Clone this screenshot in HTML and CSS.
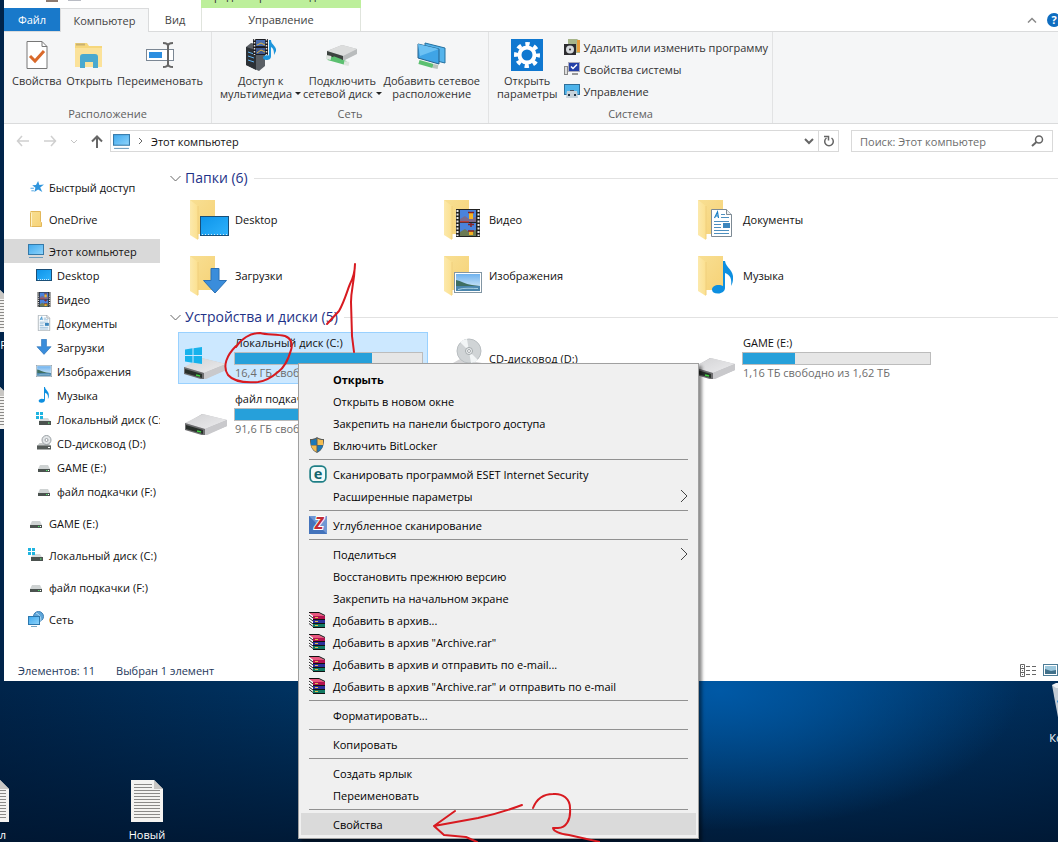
FILE: index.html
```html
<!DOCTYPE html>
<html lang="ru">
<head>
  <meta charset="UTF-8">
  <title>Этот компьютер</title>
  <link rel="stylesheet" href="styles.css">
</head>
<body>

  <svg class="sprite" aria-hidden="true">
    <defs>
      <linearGradient id="gScreen" x1="0" y1="0" x2="1" y2="1">
        <stop offset="0" stop-color="#3fa9ee"/><stop offset="1" stop-color="#8fd4fb"/>
      </linearGradient>
      <linearGradient id="gDesk" x1="0" y1="0" x2="1" y2="1">
        <stop offset="0" stop-color="#0d94ea"/><stop offset="1" stop-color="#2fb2fb"/>
      </linearGradient>
      <linearGradient id="gFolder" x1="0" y1="0" x2="1" y2="1">
        <stop offset="0" stop-color="#f8df93"/><stop offset="1" stop-color="#f6d277"/>
      </linearGradient>
      <linearGradient id="gFlap" x1="0" y1="0" x2="1" y2="0">
        <stop offset="0" stop-color="#fce9ac"/><stop offset="1" stop-color="#fbe08f"/>
      </linearGradient>
      <linearGradient id="gDrive" x1="0" y1="0" x2="1" y2="1">
        <stop offset="0" stop-color="#d2d2d4"/><stop offset="1" stop-color="#ececee"/>
      </linearGradient>
      <linearGradient id="gSky" x1="0" y1="0" x2="0" y2="1">
        <stop offset="0" stop-color="#6fb2ee"/><stop offset="1" stop-color="#e4f3fb"/>
      </linearGradient>
    </defs>

    <symbol id="pc" viewBox="0 0 16 16">
      <rect x="0.5" y="1.500" width="15" height="10" fill="url(#gScreen)" stroke="#3579a8"/>
      <path d="M1 14.500h14" stroke="#6d9dbd"/>
    </symbol>
    <symbol id="desk" viewBox="0 0 16 16">
      <rect x="0.5" y="2.500" width="15" height="11" fill="url(#gDesk)" stroke="#1a4f78"/>
      <path d="M2 12.500h12" stroke="#cfeafc" stroke-dasharray="1 1"/>
    </symbol>
    <symbol id="film" viewBox="0 0 24 28">
      <rect width="24" height="28" fill="#222"/>
      <path d="M1.500 1v26M22.500 1v26" stroke="#eee" stroke-width="2" stroke-dasharray="2 1.500"/>
      <rect x="4" y="1" width="16" height="12" fill="#4a83dc"/>
      <rect x="4" y="14" width="16" height="13" fill="#4a83dc"/>
      <path d="M4 13v-3l5-3 4 3 7-2v5z" fill="#7b6a8d"/>
      <path d="M4 12h9v1.500H4z" fill="#b5413c"/>
      <path d="M4 27v-4l5-3 4 3 7-2v6z" fill="#6b7a55"/>
      <path d="M13 4h4v6h-4zM13 22h4v4h-4z" fill="#f5b324"/>
      <path d="M12 3.500h6M15 14v4M12 15.500h6M12 22h6" stroke="#8a2320" stroke-width="1.500"/>
    </symbol>
    <symbol id="doc" viewBox="0 0 21 28">
      <path d="M.5.5h15l5 5v22H.5z" fill="#fff" stroke="#7d8a94"/>
      <path d="M15.500.5v5h5" fill="#eee" stroke="#7d8a94"/>
      <path d="M3.500 9l3-6 1 6M4.500 7h3" fill="none" stroke="#1a7fc4" stroke-width="1.200"/>
      <path d="M10 5.500h4M10 8.500h8M3 12.500h15M3 15.500h7M3 18.500h7M3 21.500h15M3 24.500h15" stroke="#4d8fbf"/>
      <rect x="12" y="14" width="7" height="5" fill="#3c86bd"/>
    </symbol>
    <symbol id="down" viewBox="0 0 24 26">
      <path d="M8 .5h8v12h7.500L12 25 .5 12.500H8z" fill="#3a8ddb" stroke="#2a70b5"/>
    </symbol>
    <symbol id="pic" viewBox="0 0 28 21">
      <rect x="0.5" y="0.5" width="27" height="20" fill="#fff" stroke="#8296a4"/>
      <rect x="2" y="2" width="24" height="17" fill="url(#gSky)"/>
      <path d="M2 8c5 1 9 4 16 5l8 1v1H2z" fill="#3f6f62"/>
      <path d="M2 14h24v5H2z" fill="#4a86ad"/>
      <path d="M4 17.500c6-2 14-1 20-1" stroke="#a6d0e6" fill="none"/>
    </symbol>
    <symbol id="note" viewBox="0 0 22 33">
      <path d="M11 0h2c1 7 9 9 8 18 0 3-1 5-2 7 1-8-1-11-6-13v15c0 3-3 5.500-7 5.500S0 31 0 28.500 3 24 6.500 24c2 0 3.500.5 4.500 1z" fill="#0d8fe0"/>
    </symbol>
    <symbol id="hdd" viewBox="0 0 16 16">
      <path d="M4 6h8l2 4H2z" fill="#cfd3d3"/>
      <rect x="2" y="10" width="12" height="3" fill="#4b524f"/>
      <path d="M10 11.500h1.500" stroke="#4fe06a"/>
      <path d="M12 11.500h1" stroke="#fff"/>
    </symbol>
    <symbol id="hddwin" viewBox="0 0 16 16">
      <path d="M5 7h7l2 3H3z" fill="#d6dada"/>
      <rect x="3" y="10" width="12" height="4" fill="#4b524f"/>
      <path d="M12 12h1.500" stroke="#6f8"/>
      <path d="M0 1h3v3H0zM4 1h3v3H4zM0 5h3v3H0zM4 5h3v3H4z" fill="#1fb4e0"/>
    </symbol>
    <symbol id="cdhdd" viewBox="0 0 16 16">
      <path d="M3.500 8h9l2.500 3H1z" fill="#c4c8c8"/>
      <circle cx="10.500" cy="5" r="4.500" fill="#e3e6e8" stroke="#9aa0a4"/>
      <circle cx="10.500" cy="5" r="1.500" fill="#fff" stroke="#9aa0a4"/>
      <rect x="1" y="10.500" width="14" height="4" fill="#555b59"/>
      <path d="M12 12.500h2" stroke="#fff"/>
    </symbol>
    <symbol id="net" viewBox="0 0 16 16">
      <circle cx="10.500" cy="5.500" r="5" fill="#5ea6da" stroke="#3f7fb2"/>
      <path d="M8 2c3 1 5 4 5 8" stroke="#b7dcf3" fill="none"/>
      <rect x="0.5" y="5.500" width="11" height="8" fill="url(#gScreen)" stroke="#2d78ae"/>
      <path d="M3 15.500h6" stroke="#7aa7c4"/>
    </symbol>
    <symbol id="star" viewBox="-3 -1 19 18">
      <path d="M9 1l1.500 4.500L16 5l-4.500 3.500L14 14l-5-3-4.500 3 1.300-5L2 6l4.500-.5z" fill="#2f95dd"/>
      <path d="M0 9.500h4M1 12.500h3" stroke="#2f95dd"/>
    </symbol>
    <symbol id="sfolder" viewBox="0 0 16 16">
      <path d="M2.500.5h10v10l1 1v4h-11z" fill="url(#gFolder)" stroke="#e2b75a"/>
      <path d="M2.500.5l1 2v13" stroke="#fff3c9" fill="none"/>
    </symbol>

    <!-- 42x42 tile icons share one folder -->
    <symbol id="bfolder" viewBox="0 0 42 42">
      <path d="M2 2h25v34H6z" fill="url(#gFolder)"/>
      <path d="M2 2l8 6v34l-8-5z" fill="url(#gFlap)"/>
      <path d="M10 8v33" stroke="#f0cf7c"/>
    </symbol>
    <symbol id="bdrive" viewBox="0 0 42 24">
      <path d="M0 11L17 1l25 6v6L20 22 0 15z" fill="#bdbdc0"/>
      <path d="M0 10l18-9 24 6-22 9z" fill="url(#gDrive)"/>
      <path d="M0 10l20 6v7L0 17z" fill="#6e6e70"/>
      <path d="M1 12l17 5v4L1 16z" fill="#29302b"/>
      <path d="M12 18l4 1" stroke="#3fd33f" stroke-width="1.500"/>
      <path d="M20 16l22-9v6l-22 10z" fill="#c9c9cc"/>
    </symbol>
    <symbol id="winlogo" viewBox="0 0 17 17">
      <path d="M0 2.500L7.500 1.300V8H0zM8.500 1.200L17 0v8H8.500zM0 9h7.500v6.700L0 14.500zM8.500 9H17v8l-8.500-1.200z" fill="#16b2ec"/>
    </symbol>
    <symbol id="disc" viewBox="0 0 42 42">
      <path d="M4 30l14-8 22 4-14 12z" fill="#d4d4d6"/>
      <circle cx="27" cy="14" r="12" fill="#d0d4d6" stroke="#b9bec1"/>
      <path d="M27 14L18 5a12 12 0 0 1 7-3zM27 14l9 9a12 12 0 0 1-7 3z" fill="#f2f5f6"/>
      <circle cx="27" cy="14" r="3.500" fill="#eef0f1" stroke="#a3a9ac"/>
      <circle cx="27" cy="14" r="1.500" fill="#fff" stroke="#a3a9ac"/>
    </symbol>

    <symbol id="shield" viewBox="0 0 16 16">
      <path d="M8 0c2 1.500 4 2 7 2 0 6-1 11-7 14C2 13 1 8 1 2c3 0 5-.5 7-2z" fill="#5b5b56"/>
      <path d="M7.500 1.500V8H2V3c2 0 4-.5 5.500-1.500zM8.500 8.500H14c-1 3-2.500 5-5.500 6.500z" fill="#1b78b8"/>
      <path d="M8.500 1.500V8H14V3c-2 0-4-.5-5.500-1.500zM7.500 8.500H2c1 3 2.500 5 5.500 6.500z" fill="#f4bd51"/>
    </symbol>
    <symbol id="eset" viewBox="0 0 16 16">
      <rect x="1" y="1" width="14" height="14" rx="4" fill="#f2fafa" stroke="#1f7f86" stroke-width="1.500"/>
      <text class="eset-e" x="8" y="12" text-anchor="middle">e</text>
    </symbol>
    <symbol id="zlogo" viewBox="0 0 18 18">
      <rect width="18" height="18" fill="#6f97d4"/>
      <path d="M0 0l18 18H0z" fill="#4373bb"/>
      <text class="zlogo-z" x="10" y="13" text-anchor="middle">Z</text>
    </symbol>
    <symbol id="rar" viewBox="0 0 16 16">
      <path d="M0 1h10l6 3H4z" fill="#e8567e"/>
      <path d="M0 1l4 3v11l-4-3z" fill="#fff"/>
      <path d="M0 3l4 3M0 6l4 3M0 9l4 3M0 11.500l4 3" stroke="#222"/>
      <path d="M4 4h12v3H4z" fill="#b3124f"/>
      <path d="M4 8h12v3H4z" fill="#2b2f9a"/>
      <path d="M4 12h12v3H4z" fill="#127a63"/>
      <path d="M0 .5h10l6 3M4 7.500h12M4 11.500h12M4 15.500h12" stroke="#111" fill="none"/>
      <path d="M6 5.500h3M6 9.500h3M6 13.500h3" stroke="#e9c04a"/>
    </symbol>
    <symbol id="textdoc" viewBox="0 0 32 42">
      <path d="M0 0h23l9 9v33H0z" fill="#f4f3f1"/>
      <path d="M23 0v9h9z" fill="#c9c7c4"/>
      <path d="M3 4.500h18M3 7.500h18M3 10.500h26M3 13.500h26M3 16.500h26M3 19.500h26M3 22.500h26M3 25.500h26M3 28.500h26M3 31.500h26M3 34.500h26M3 37.500h26" stroke="#8b8a88"/>
    </symbol>
  </svg>

  <div class="desktop">

    <div class="shortcut shortcut-edge-1"><svg width="32" height="42"><use href="#textdoc"/></svg><span>F</span></div>
    <div class="shortcut shortcut-edge-2"><svg width="32" height="42"><use href="#textdoc"/></svg></div>
    <div class="shortcut shortcut-edge-3"><svg width="32" height="42"><use href="#textdoc"/></svg><span>л</span></div>
    <div class="shortcut shortcut-new"><svg width="32" height="42"><use href="#textdoc"/></svg><span>Новый</span></div>
    <div class="shortcut shortcut-bin">
      <svg width="40" height="42" viewBox="0 0 40 42">
        <path d="M0 2l40-1-6 39H7z" fill="#c3cbd3"/>
        <path d="M0 2l4-2h32l4 1-4 4H4z" fill="#eef1f4"/>
        <path d="M5 18l6-4 6 8-8 6z" fill="#2384d6"/>
      </svg>
      <span>Корзина</span>
    </div>

    <div class="window">
      <header class="titlebar">
        <div class="quick">
          <svg width="40" height="2"><rect width="12" height="2" fill="#8d7a70"/><rect x="22" width="13" height="1" fill="#b9bcc4"/></svg>
        </div>
        <div class="context-title">Средства работы с дисками</div>
      </header>

      <nav class="tabs">
        <button class="tab tab-file">Файл</button>
        <button class="tab tab-active">Компьютер</button>
        <button class="tab tab-view">Вид</button>
        <button class="tab tab-manage">Управление</button>
        <div class="tabs-right">
          <button class="plain" aria-label="Свернуть ленту"><svg width="10" height="6"><path d="M1 5.500l4-4 4 4" fill="none" stroke="#8a8a8a" stroke-width="1.500"/></svg></button>
          <button class="help" aria-label="Справка">?</button>
        </div>
      </nav>

      <section class="ribbon">
        <div class="group group-place">
          <div class="group-tools">
            <button class="big">
              <svg width="22" height="30" viewBox="0 0 22 30"><path d="M1 1.500h15l5 5v22H1z" fill="#fff" stroke="#777"/><path d="M16 1.500v5h5" fill="none" stroke="#777"/><path d="M4 16l5 5 9-10" fill="none" stroke="#d9692a" stroke-width="3"/></svg>
              <span>Свойства</span>
            </button>
            <button class="big">
              <svg width="30" height="30" viewBox="0 0 30 30"><path d="M1 3h12l2 3h13v21H1z" fill="#f6d77c"/><path d="M1 8h27v19H1z" fill="#fbe29a"/><path d="M2 4.500h9" stroke="#c9b170" stroke-width="2"/><path d="M6 28V17q0-3 3-3h12q3 0 3 3v11h-5v-6h-8v6z" fill="#4aa9cf"/></svg>
              <span>Открыть</span>
            </button>
            <button class="big">
              <svg width="30" height="30" viewBox="0 0 30 30"><rect x="1.500" y="9.500" width="27" height="11" fill="#fff" stroke="#7b8794"/><rect x="4" y="12" width="13" height="6" fill="#2b8ee0"/><path d="M18 3q5 0 5 3 0-3 5-3M23 5v21M18 27q5 0 5-3 0 3 5 3" fill="none" stroke="#666" stroke-width="2"/></svg>
              <span>Переименовать</span>
            </button>
          </div>
          <div class="group-name">Расположение</div>
        </div>

        <div class="group group-net">
          <div class="group-tools">
            <button class="big">
              <svg width="34" height="32" viewBox="0 0 34 32"><path d="M2 8l5-4 14 3v20l-6 5L2 26z" fill="#5a5f65"/><path d="M2 8l10 3v20L2 26z" fill="#2c3035"/><path d="M4 13l6 2M4 17l6 2M4 21l6 2" stroke="#5fb1f0"/><rect x="9" y="0" width="15" height="16" fill="#1d1d22"/><path d="M10.500 0v16M22.500 0v16" stroke="#ddd" stroke-width="1.500" stroke-dasharray="1.500 1.500"/><rect x="12" y="1" width="9" height="6" fill="#4a6db0"/><rect x="12" y="9" width="9" height="6" fill="#3f5a93"/><path d="M13 6l4-2 4 2M13 14l4-3 4 2" stroke="#e0b53a" fill="none"/><path d="M25 1h2c0 5 6 6 5 11l-2 4c0-5-1-7-3-8v9c0 3-2 4-4.500 4S19 20 19 18.500s3-3 6-2z" fill="#1e96dc"/></svg>
              <span>Доступ к<br>мультимедиа<i class="caret"></i></span>
            </button>
            <button class="big">
              <svg width="32" height="24" viewBox="0 0 32 24"><path d="M1 8l15-6 15 4v5l-14 7-16-5z" fill="#b9bcbd"/><path d="M1 8l15-6 15 4-14 7z" fill="#dcdddd"/><path d="M1 8l16 5v5L1 13z" fill="#3d4340"/><path d="M2 15l18 5M7 15l8 3" stroke="#5cc070" stroke-width="4"/><path d="M0 14l5 1M18 20l5 1" stroke="#dfe5df" stroke-width="4"/></svg>
              <span>Подключить<br>сетевой диск<i class="caret"></i></span>
            </button>
            <button class="big">
              <svg width="30" height="28" viewBox="0 0 30 28"><path d="M8 2l20 5v15L8 17z" fill="#55b4ec" stroke="#24709f"/><path d="M1 3l21 5v15L1 17z" fill="#3fa4e6" stroke="#24608a"/><path d="M1 3l21 5L3 15z" fill="#6cc1f3"/><path d="M2 21l14 4" stroke="#5cc070" stroke-width="4"/><path d="M16 25l5 1" stroke="#b9c2bb" stroke-width="4"/></svg>
              <span>Добавить сетевое<br>расположение</span>
            </button>
          </div>
          <div class="group-name">Сеть</div>
        </div>

        <div class="group group-system">
          <div class="group-tools">
            <button class="big">
              <svg width="32" height="32" viewBox="0 0 32 32"><rect width="32" height="32" fill="#1078d0"/><circle cx="16" cy="16" r="7.500" fill="none" stroke="#fff" stroke-width="4"/><circle cx="16" cy="16" r="11" fill="none" stroke="#fff" stroke-width="4" stroke-dasharray="4.300 4.340" stroke-dashoffset="2"/></svg>
              <span>Открыть<br>параметры</span>
            </button>
            <div class="small-list">
              <button class="small"><svg width="16" height="16"><path d="M4 0h9l3 2v12H4z" fill="#a8b58a"/><path d="M13 1h3v12h-3z" fill="#e59b3c"/><rect y="5" width="12" height="11" fill="#2c2c30"/><circle cx="6" cy="10.500" r="4" fill="#d7dade"/><circle cx="6" cy="10.500" r="1" fill="#2c2c30"/></svg>Удалить или изменить программу</button>
              <button class="small"><svg width="16" height="16"><rect x="0.5" y="5.500" width="3" height="8" fill="#ddd" stroke="#888"/><rect x="4.500" y="1.500" width="11" height="9" fill="#2340a8" stroke="#aab"/><path d="M7 5.500l2 2 4-4" stroke="#fff" stroke-width="1.500" fill="none"/><path d="M8 13h6" stroke="#999" stroke-width="2"/></svg>Свойства системы</button>
              <button class="small"><svg width="16" height="16"><rect x="0.5" y="1.500" width="15" height="10" fill="#4db3ea" stroke="#2e6f9a"/><path d="M3 8h10l1 7H2z" fill="#c6d2da"/><path d="M6 7.500h4" stroke="#456" /><path d="M5 11v2M11 11v2" stroke="#234" stroke-width="2"/></svg>Управление</button>
            </div>
          </div>
          <div class="group-name">Система</div>
        </div>
      </section>

      <div class="location">
        <div class="arrows">
          <button class="plain" aria-label="Назад"><svg width="14" height="12"><path d="M6 1L1.500 6 6 11M2 6h11" fill="none" stroke="#cfcfcf" stroke-width="1.500"/></svg></button>
          <button class="plain" aria-label="Вперед"><svg width="14" height="12"><path d="M8 1l4.500 5L8 11M12 6H1" fill="none" stroke="#cfcfcf" stroke-width="1.500"/></svg></button>
          <button class="plain" aria-label="Последние"><svg width="8" height="5"><path d="M1 1l3 3 3-3" fill="none" stroke="#c4c4c4"/></svg></button>
          <button class="plain" aria-label="Вверх"><svg width="12" height="13"><path d="M1 6.500L6 1.500l5 5M6 2v11" fill="none" stroke="#666" stroke-width="2"/></svg></button>
        </div>
        <div class="address">
          <svg width="17" height="17"><use href="#pc"/></svg>
          <svg width="5" height="8"><path d="M1 1l3 3-3 3" fill="none" stroke="#666"/></svg>
          <a href="#">Этот компьютер</a>
          <button class="plain drop" aria-label="Журнал"><svg width="10" height="7"><path d="M1 1l4 4 4-4" fill="none" stroke="#666" stroke-width="2"/></svg></button>
          <button class="plain refresh" aria-label="Обновить"><svg width="12" height="12"><path d="M8.500 3A4.300 4.300 0 1 1 3.500 3M1 1.500h4.500v4" fill="none" stroke="#666" stroke-width="1.500"/></svg></button>
        </div>
        <div class="search">
          <input type="text" placeholder="Поиск: Этот компьютер" aria-label="Поиск">
          <svg width="13" height="12"><circle cx="8" cy="4.500" r="3.500" fill="none" stroke="#666" stroke-width="1.500"/><path d="M5.500 7L1 11" stroke="#666" stroke-width="2"/></svg>
        </div>
      </div>

      <div class="content">
        <nav class="tree">
          <a class="node" href="#"><svg width="16" height="16"><use href="#star"/></svg>Быстрый доступ</a>
          <a class="node spaced" href="#"><svg width="16" height="16"><use href="#sfolder"/></svg>OneDrive</a>
          <a class="node spaced current" href="#"><svg width="16" height="16"><use href="#pc"/></svg>Этот компьютер</a>
          <a class="node child" href="#"><svg width="16" height="16"><use href="#desk"/></svg>Desktop</a>
          <a class="node child" href="#"><svg width="16" height="15"><use href="#film"/></svg>Видео</a>
          <a class="node child" href="#"><svg width="16" height="16"><use href="#doc"/></svg>Документы</a>
          <a class="node child" href="#"><svg width="16" height="16"><use href="#down"/></svg>Загрузки</a>
          <a class="node child" href="#"><svg width="16" height="16"><use href="#pic"/></svg>Изображения</a>
          <a class="node child" href="#"><svg width="16" height="16"><use href="#note"/></svg>Музыка</a>
          <a class="node child" href="#"><svg width="16" height="16"><use href="#hddwin"/></svg>Локальный диск (C:)</a>
          <a class="node child" href="#"><svg width="16" height="16"><use href="#cdhdd"/></svg>CD-дисковод (D:)</a>
          <a class="node child" href="#"><svg width="16" height="16"><use href="#hdd"/></svg>GAME (E:)</a>
          <a class="node child" href="#"><svg width="16" height="16"><use href="#hdd"/></svg>файл подкачки (F:)</a>
          <a class="node spaced" href="#"><svg width="16" height="16"><use href="#hdd"/></svg>GAME (E:)</a>
          <a class="node spaced" href="#"><svg width="16" height="16"><use href="#hddwin"/></svg>Локальный диск (C:)</a>
          <a class="node spaced" href="#"><svg width="16" height="16"><use href="#hdd"/></svg>файл подкачки (F:)</a>
          <a class="node spaced" href="#"><svg width="16" height="16"><use href="#net"/></svg>Сеть</a>
        </nav>

        <main class="items">
          <h2><svg width="11" height="7"><path d="M.5 1l5 5 5-5" fill="none" stroke="#666"/></svg>Папки (6)</h2>
          <div class="grid">
            <div class="tile"><svg width="42" height="42"><use href="#bfolder"/><svg x="12" y="18" width="29" height="20" viewBox="0 0 29 20"><rect x="0.5" y="0.5" width="28" height="19" fill="url(#gDesk)" stroke="#1a4f78"/><path d="M2 18.500h25" stroke="#cfeafc" stroke-dasharray="1 2"/></svg></svg><span>Desktop</span></div>
            <div class="tile"><svg width="42" height="42"><use href="#bfolder"/><use href="#film" x="14" y="11" width="24" height="28"/></svg><span>Видео</span></div>
            <div class="tile"><svg width="42" height="42"><use href="#bfolder"/><use href="#doc" x="15" y="11" width="21" height="28"/></svg><span>Документы</span></div>
            <div class="tile"><svg width="42" height="42"><use href="#bfolder"/><use href="#down" x="15" y="14" width="24" height="26"/></svg><span>Загрузки</span></div>
            <div class="tile"><svg width="42" height="42"><use href="#bfolder"/><use href="#pic" x="12" y="18" width="28" height="21"/></svg><span>Изображения</span></div>
            <div class="tile"><svg width="42" height="42"><use href="#bfolder"/><use href="#note" x="16" y="7" width="22" height="33"/></svg><span>Музыка</span></div>
          </div>

          <h2><svg width="11" height="7"><path d="M.5 1l5 5 5-5" fill="none" stroke="#666"/></svg>Устройства и диски (5)</h2>
          <div class="grid">
            <div class="tile selected drive">
              <svg width="50" height="42"><use href="#bdrive" x="5" y="20" width="42" height="24"/><use href="#winlogo" x="6" y="10" width="17" height="17"/></svg>
              <div class="info"><span>Локальный диск (C:)</span><div class="bar"><div style="width: 73%"></div></div><small>16,4 ГБ свободно из 59,5 ГБ</small></div>
            </div>
            <div class="tile"><svg width="42" height="42"><use href="#disc"/></svg><span>CD-дисковод (D:)</span></div>
            <div class="tile drive">
              <svg width="50" height="42"><use href="#bdrive" x="6" y="20" width="42" height="24"/></svg>
              <div class="info"><span>GAME (E:)</span><div class="bar"><div style="width: 28%"></div></div><small>1,16 ТБ свободно из 1,62 ТБ</small></div>
            </div>
            <div class="tile drive">
              <svg width="50" height="42"><use href="#bdrive" x="6" y="20" width="42" height="24"/></svg>
              <div class="info"><span>файл подкачки (F:)</span><div class="bar"><div style="width: 60%"></div></div><small>91,6 ГБ свободно</small></div>
            </div>
          </div>
        </main>
      </div>

      <footer class="status">
        <span>Элементов: 11</span>
        <span>Выбран 1 элемент</span>
        <div class="views">
          <button class="plain" aria-label="Таблица"><svg width="16" height="13"><path d="M.5.5h4v12h-4zM.5 4.500h4M.5 8.500h4M2 2.500h1M2 6.500h1M2 10.500h1M6 2.500h4M6 6.500h4M6 10.500h4M12 2.500h4M12 6.500h4M12 10.500h4" fill="none" stroke="#666"/></svg></button>
          <button class="plain" aria-label="Крупные значки"><svg width="15" height="12"><rect x="0.5" y="0.5" width="14" height="11" fill="#fff" stroke="#4d7c96"/><rect x="2" y="2" width="11" height="8" fill="#9cc7dc"/><path d="M2 5l6 2 5-1v4H2z" fill="#41708a"/></svg></button>
        </div>
      </footer>
    </div>

    <div class="menu" role="menu">
      <button role="menuitem" class="default">Открыть</button>
      <button role="menuitem">Открыть в новом окне</button>
      <button role="menuitem">Закрепить на панели быстрого доступа</button>
      <button role="menuitem"><svg width="16" height="16"><use href="#shield"/></svg>Включить BitLocker</button>
      <hr>
      <button role="menuitem"><svg width="18" height="18"><use href="#eset"/></svg>Сканировать программой ESET Internet Security</button>
      <button role="menuitem" class="sub">Расширенные параметры<svg width="8" height="14"><path d="M1 1l6 6-6 6" fill="none" stroke="#444"/></svg></button>
      <hr>
      <button role="menuitem"><svg width="18" height="18"><use href="#zlogo"/></svg>Углубленное сканирование</button>
      <hr>
      <button role="menuitem" class="sub">Поделиться<svg width="8" height="14"><path d="M1 1l6 6-6 6" fill="none" stroke="#444"/></svg></button>
      <button role="menuitem">Восстановить прежнюю версию</button>
      <button role="menuitem">Закрепить на начальном экране</button>
      <button role="menuitem"><svg width="16" height="16"><use href="#rar"/></svg>Добавить в архив...</button>
      <button role="menuitem"><svg width="16" height="16"><use href="#rar"/></svg>Добавить в архив "Archive.rar"</button>
      <button role="menuitem"><svg width="16" height="16"><use href="#rar"/></svg>Добавить в архив и отправить по e-mail...</button>
      <button role="menuitem"><svg width="16" height="16"><use href="#rar"/></svg>Добавить в архив "Archive.rar" и отправить по e-mail</button>
      <hr>
      <button role="menuitem">Форматировать...</button>
      <hr>
      <button role="menuitem">Копировать</button>
      <hr>
      <button role="menuitem">Создать ярлык</button>
      <button role="menuitem">Переименовать</button>
      <hr>
      <button role="menuitem" class="hover">Свойства</button>
    </div>

    <!-- hand-drawn marks over the window -->
    <svg class="marks" width="380" height="590" viewBox="220 252 380 590" aria-hidden="true">
      <path d="M236 347c5-8 14-14 24-14 7 2 16 1 25 3 6 2 8 8 6 14-3 10-6 17-13 22-7 6-12 9-20 10-12 1-24 0-30-7-6-9-1-20 8-29"/>
      <path d="M327 324l12-13c6-11 8-20 11-27 4-8 5-14 5-20-1 22-4 25-4 38l1 34 2 16"/>
      <path d="M522 805c-16 6-30 10-44 13l-44 8M455 811l-21 15 10 9 22 2 11 5"/>
      <path d="M533 808c4-10 12-14 20-14 10-1 17 5 17 14 1 12-4 20-12 20l-5 0c1 4 8 6 16 7l31 7"/>
    </svg>
  </div>

</body>
</html>
```
FILE: styles.css
```css
body {
  margin: 0;
  font-family: "Open Sans", "Noto Sans", sans-serif;
  font-size: 11px;
  color: #111;
}

button,
input {
  font: inherit;
  color: inherit;
  border: 0;
  padding: 0;
  margin: 0;
  background: none;
}

a {
  color: inherit;
  text-decoration: none;
}

svg {
  display: block;
  flex: none;
}

.sprite {
  position: absolute;
  width: 0;
  height: 0;
}

.desktop {
  position: relative;
  min-height: 100vh;
  overflow: hidden;
  background:
    radial-gradient(ellipse 300px 140px at 720px 690px, #0059a6 0%, rgba(0, 70, 135, 0) 100%),
    linear-gradient(180deg, rgba(0, 20, 45, 0) 82%, rgba(0, 20, 45, 0.8) 100%),
    linear-gradient(90deg, #00244a 0%, #003260 28%, #003b70 75%, #002c58 100%);
}

/* desktop shortcuts */
.shortcut {
  position: absolute;
  width: 72px;
  display: flex;
  flex-direction: column;
  align-items: center;
  gap: 5px;
  color: #fff;
  line-height: 16px;
}

.shortcut-edge-1 { left: -43px; top: 290px; }
.shortcut-edge-2 { left: -43px; top: 387px; }
.shortcut-edge-3 { left: -43px; top: 780px; }
.shortcut-edge-1 span,
.shortcut-edge-3 span { padding-left: 20px; }
.shortcut-new { left: 111px; top: 780px; }
.shortcut-bin { left: 1036px; top: 683px; }

/* window */
.window {
  position: relative;
  margin: 0 -8px 0 4px;
  background: #fff;
}

.titlebar {
  display: flex;
  height: 8px;
  overflow: hidden;
}

.quick {
  width: 197px;
  box-sizing: border-box;
  padding-left: 42px;
}

.context-title {
  display: flex;
  flex-direction: column;
  justify-content: flex-end;
  width: 160px;
  box-sizing: border-box;
  padding-bottom: 4px;
  line-height: 16px;
  text-align: center;
  white-space: nowrap;
  color: #333;
  background: #bdef9b;
}

.tabs {
  display: flex;
  height: 23px;
  border-bottom: 1px solid #dadbdc;
}

.tab {
  color: #444;
}

.tab-file {
  width: 56px;
  color: #fff;
  background: #1979ca;
}

.tab-active {
  width: 89px;
  box-sizing: border-box;
  margin-bottom: -1px;
  border: 1px solid #dadbdc;
  border-bottom: 0;
  background: #f5f6f7;
}

.tab-view {
  width: 52px;
}

.tab-manage {
  width: 160px;
  box-sizing: border-box;
  border-left: 1px solid #e0e4dd;
  border-right: 1px solid #e0e4dd;
}

.tabs-right {
  display: flex;
  align-items: center;
  gap: 10px;
  margin-left: auto;
  padding-right: 5px;
}

.help {
  width: 14px;
  height: 14px;
  border-radius: 50%;
  background: #0f6dc0;
  color: #fff;
  font-weight: bold;
  line-height: 14px;
}

/* ribbon */
.ribbon {
  display: flex;
  height: 91px;
  background: #f5f6f7;
  border-bottom: 1px solid #dadbdc;
  color: #333;
}

.group {
  display: flex;
  flex-direction: column;
  justify-content: space-between;
  box-sizing: border-box;
  padding: 4px 8px 0;
  border-right: 1px solid #e2e3e4;
}

.group-place { width: 208px; }
.group-net { width: 277px; }
.group-system { width: 284px; }

.group-tools {
  display: flex;
  justify-content: space-between;
}

.group-name {
  line-height: 18px;
  text-align: center;
  color: #5f5f5f;
}

.big {
  display: flex;
  flex-direction: column;
  align-items: center;
  line-height: 13px;
  white-space: nowrap;
}

.big svg {
  height: 38px;
}

.caret {
  display: inline-block;
  margin-left: 3px;
  vertical-align: 3px;
  border: 3px solid transparent;
  border-top-color: #222;
  border-bottom: 0;
}

.small-list {
  display: flex;
  flex-direction: column;
  flex: 1;
  margin-left: 7px;
}

.small {
  display: flex;
  align-items: center;
  gap: 3px;
  height: 22px;
  white-space: nowrap;
}

/* address row */
.location {
  display: flex;
  gap: 12px;
  padding: 6px 13px 6px 12px;
}

.plain {
  display: flex;
  align-items: center;
  justify-content: center;
}

.arrows {
  display: flex;
  align-items: center;
  gap: 13px;
  width: 82px;
}

.address,
.search {
  display: flex;
  align-items: center;
  box-sizing: border-box;
  height: 22px;
  border: 1px solid #d9d9d9;
  background: #fff;
}

.address {
  flex: 1;
  gap: 8px;
  padding-left: 2px;
}

.drop {
  margin-left: auto;
  margin-right: -4px;
}

.refresh {
  width: 20px;
  height: 20px;
  border-left: 1px solid #d9d9d9;
}

.search {
  width: 202px;
  padding: 0 8px;
}

.search input {
  flex: 1;
  min-width: 0;
  outline: none;
}

.search input::placeholder {
  color: #6d6d6d;
  opacity: 1;
}

/* body */
.content {
  display: flex;
}

.tree {
  width: 156px;
  flex: none;
  overflow: hidden;
  padding: 17px 0 28px;
}

.node {
  display: flex;
  align-items: center;
  gap: 5px;
  height: 24px;
  padding-left: 24px;
  white-space: nowrap;
}

.spaced {
  margin-top: 8px;
}

.child {
  padding-left: 32px;
}

.current {
  background: #d9d9d9;
}

.items {
  flex: 1;
  min-width: 0;
  margin-left: 2px;
  padding: 10px 0 0 8px;
}

h2 {
  display: flex;
  align-items: center;
  gap: 4px;
  margin: 0 0 5px;
  font-size: 14px;
  font-weight: normal;
  line-height: 20px;
  color: #1e3287;
}

h2::after {
  content: "";
  flex: 1;
  height: 1px;
  margin-left: 2px;
  background: #e2e2e2;
}

.grid {
  display: grid;
  grid-template-columns: repeat(auto-fill, 250px);
  gap: 4px;
  margin: 0 0 6px 8px;
}

.tile {
  display: flex;
  align-items: center;
  gap: 5px;
  height: 52px;
  box-sizing: border-box;
  padding-left: 10px;
}

.drive {
  padding-left: 0;
  border: 1px solid transparent;
}

.selected {
  background: #cce8ff;
  border-color: #99d1ff;
}

.info {
  width: 189px;
  line-height: 16px;
  white-space: nowrap;
}

.info span,
.info small {
  display: block;
  height: 17px;
  overflow: hidden;
  padding-left: 1px;
}

.bar {
  height: 11px;
  border: 1px solid #bcbcbc;
  background: #e6e6e6;
}

.bar div {
  height: 11px;
  background: #26a0da;
}

small {
  font-size: 11px;
  color: #6d6d6d;
}

.status {
  display: flex;
  align-items: center;
  gap: 21px;
  height: 22px;
  padding: 0 8px 0 14px;
  color: #1e395b;
}

.views {
  display: flex;
  gap: 7px;
  margin-left: auto;
}

/* context menu */
.menu {
  position: absolute;
  left: 298px;
  top: 363px;
  width: 401px;
  box-sizing: border-box;
  padding: 4px 2px 3px;
  border: 1px solid #a0a0a0;
  background: #f0f0f0;
  box-shadow: 3px 3px 3px rgba(0, 0, 0, 0.45);
}

.menu button {
  position: relative;
  display: flex;
  align-items: center;
  width: 100%;
  height: 22px;
  padding: 0 8px 0 32px;
  white-space: nowrap;
  color: #000;
}

.menu svg {
  position: absolute;
  left: 8px;
}

.menu .sub svg {
  position: static;
  margin-left: auto;
}

.menu hr {
  height: 1px;
  margin: 3px 8px;
  border: 0;
  background: #919191;
}

.menu .default {
  font-weight: bold;
}

.menu .hover {
  background: #dadada;
}

.eset-e {
  font-size: 13px;
  font-weight: bold;
  fill: #14666d;
}

.zlogo-z {
  font-size: 16px;
  font-weight: bold;
  font-style: italic;
  fill: #c22b33;
  stroke: #fff;
  paint-order: stroke;
  stroke-width: 2px;
}

.marks {
  position: absolute;
  left: 220px;
  top: 252px;
  pointer-events: none;
}

.marks path {
  fill: none;
  stroke: #d81a20;
  stroke-width: 2;
  stroke-linecap: round;
  stroke-linejoin: round;
}
```
